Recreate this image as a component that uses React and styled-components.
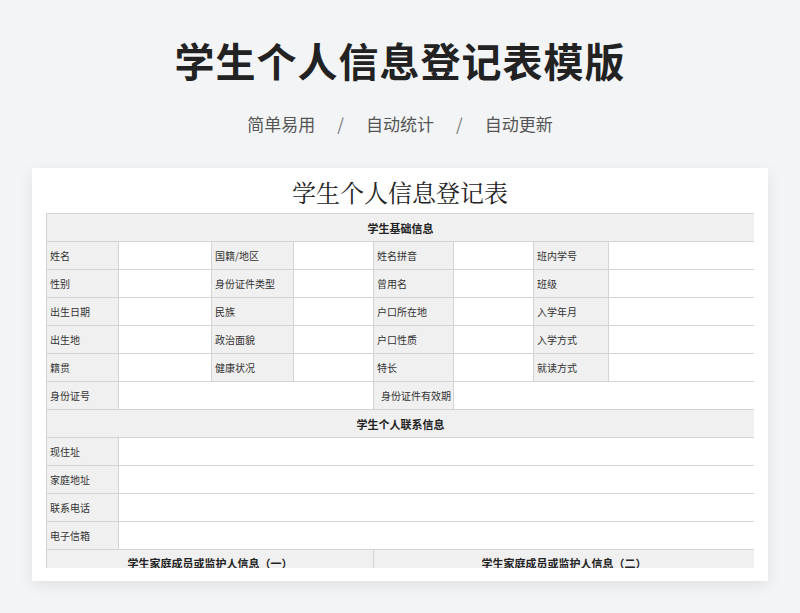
import React from 'react';
import styled, { createGlobalStyle } from 'styled-components';

const Global = createGlobalStyle`
  body { margin: 0; background: #f3f4f6; font-family: "Noto Sans CJK SC", "Noto Sans", sans-serif; }
`;

const Page = styled.div`
  width: 800px; height: 613px; overflow: hidden;
  display: flex; flex-direction: column; align-items: center;
`;
const Heading = styled.h1`
  margin: 30px 0 0; height: 60px; line-height: 60px;
  font-size: 40px; font-weight: 700; color: #222; letter-spacing: 1px;
`;
const Tags = styled.div`
  margin-top: 22px; display: flex; gap: 22px; font-size: 17px; color: #555; line-height: 24px;
`;
const Sep = styled.span` color: #777; `;
const Card = styled.div`
  margin-top: 32px; width: 736px; height: 413px; background: #fff;
  box-shadow: 0 4px 14px rgba(0,0,0,0.08);
  padding: 0 14px 13px; box-sizing: border-box;
  display: flex; flex-direction: column;
`;
const SheetTitle = styled.div`
  height: 45px; line-height: 48px; text-align: center; font-size: 24px; color: #222;
  font-family: "Noto Serif CJK SC", "Noto Sans CJK SC", serif;
`;
const Clip = styled.div` flex: 1; overflow: hidden; `;
const Table = styled.table`
  width: 708px; border-collapse: collapse; table-layout: fixed;
  font-size: 10px; color: #333;
  td { border: 1px solid #d4d4d4; height: 27px; padding: 0 3px; white-space: nowrap; }
`;
const Section = styled.td`
  background: #f0f0f0; text-align: center; font-weight: 700; font-size: 11px; color: #222;
  vertical-align: ${p => (p.$top ? 'top' : 'middle')};
  padding-top: ${p => (p.$top ? '5px' : '0')} !important;
`;
const Label = styled.td`
  background: #f0f0f0;
  padding-left: ${p => (p.$indent ? '7px' : '3px')} !important;
`;
const Cell = styled.td` background: #fff; `;

const grid = [
  ['姓名', '国籍/地区', '姓名拼音', '班内学号'],
  ['性别', '身份证件类型', '曾用名', '班级'],
  ['出生日期', '民族', '户口所在地', '入学年月'],
  ['出生地', '政治面貌', '户口性质', '入学方式'],
  ['籍贯', '健康状况', '特长', '就读方式'],
];
const contact = ['现住址', '家庭地址', '联系电话', '电子信箱'];

export default function App() {
  return (
    <Page>
      <Global />
      <Heading>学生个人信息登记表模版</Heading>
      <Tags>
        <span>简单易用</span><Sep>/</Sep><span>自动统计</span><Sep>/</Sep><span>自动更新</span>
      </Tags>
      <Card>
        <SheetTitle>学生个人信息登记表</SheetTitle>
        <Clip>
          <Table>
            <colgroup>
              <col style={{ width: 72 }} /><col style={{ width: 93 }} />
              <col style={{ width: 82 }} /><col style={{ width: 80 }} />
              <col style={{ width: 80 }} /><col style={{ width: 80 }} />
              <col style={{ width: 75 }} /><col style={{ width: 146 }} />
            </colgroup>
            <tbody>
              <tr><Section colSpan={8}>学生基础信息</Section></tr>
              {grid.map((r, i) => (
                <tr key={i}>
                  {r.map(l => (
                    <React.Fragment key={l}><Label>{l}</Label><Cell /></React.Fragment>
                  ))}
                </tr>
              ))}
              <tr>
                <Label>身份证号</Label><Cell colSpan={3} />
                <Label $indent>身份证件有效期</Label><Cell colSpan={3} />
              </tr>
              <tr><Section colSpan={8}>学生个人联系信息</Section></tr>
              {contact.map(l => (
                <tr key={l}><Label>{l}</Label><Cell colSpan={7} /></tr>
              ))}
              <tr>
                <Section $top colSpan={4}>学生家庭成员或监护人信息（一）</Section>
                <Section $top colSpan={4}>学生家庭成员或监护人信息（二）</Section>
              </tr>
            </tbody>
          </Table>
        </Clip>
      </Card>
    </Page>
  );
}
